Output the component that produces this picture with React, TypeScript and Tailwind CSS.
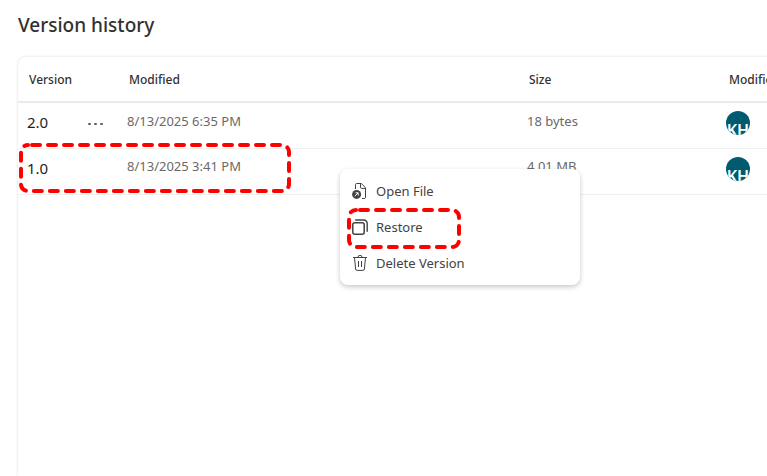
const versions = [
  { version: '2.0', modified: '8/13/2025 6:35 PM', size: '18 bytes', initials: 'KH', showMenuButton: true },
  { version: '1.0', modified: '8/13/2025 3:41 PM', size: '4.01 MB', initials: 'KH', showMenuButton: false },
]

function OpenFileIcon() {
  return (
    <svg width="16" height="16" viewBox="0 0 16 16" fill="none" stroke="currentColor" aria-hidden="true">
      <path d="M3.5 6V1.7A1.2 1.2 0 0 1 4.7 0.5h4.6l4.2 4.2v9.6a1.2 1.2 0 0 1-1.2 1.2H10" />
      <path d="M8.5 0.8v3.4a1.2 1.2 0 0 0 1.2 1.2h3.5" />
      <circle cx="4.6" cy="11.4" r="4.5" fill="currentColor" stroke="none" />
      <path d="M2.8 13.2l3.3-3.3M3.5 9.8h2.7v2.7" stroke="#fff" />
    </svg>
  )
}

function RestoreIcon() {
  return (
    <svg width="16" height="16" viewBox="0 0 16 16" fill="none" stroke="currentColor" aria-hidden="true">
      <rect x="0.8" y="3.8" width="11.4" height="11.4" rx="2" strokeWidth="1.5" />
      <path d="M3.2 1h8.5a3.5 3.5 0 0 1 3.5 3.5v8.2" strokeWidth="1.4" />
    </svg>
  )
}

function DeleteIcon() {
  return (
    <svg width="16" height="16" viewBox="0 0 16 16" fill="none" stroke="currentColor" aria-hidden="true">
      <path d="M1 2.5h14M6 2.3a2 2 0 0 1 4 0M2.5 2.7l1.1 11.3a1.5 1.5 0 0 0 1.5 1.4h5.8a1.5 1.5 0 0 0 1.5-1.4l1.1-11.3" />
      <path d="M6.5 6v6M9.5 6v6" />
    </svg>
  )
}

const menuItems = [
  { label: 'Open File', icon: OpenFileIcon },
  { label: 'Restore', icon: RestoreIcon },
  { label: 'Delete Version', icon: DeleteIcon },
]

function Highlight({ width, height, className }: { width: number; height: number; className: string }) {
  const r = 7
  const right = width - 2
  const bottom = height - 2
  return (
    <svg width={width} height={height} className={`absolute pointer-events-none ${className}`} aria-hidden="true">
      <path
        d={`M${2 + r} 2H${right - r}A${r} ${r} 0 0 1 ${right} ${2 + r}V${bottom - r}A${r} ${r} 0 0 1 ${right - r} ${bottom}H${2 + r}A${r} ${r} 0 0 1 2 ${bottom - r}V${2 + r}A${r} ${r} 0 0 1 ${2 + r} 2`}
        fill="none"
        stroke="#ff0000"
        strokeWidth="4"
        strokeLinecap="round"
        strokeDasharray="8 8"
        strokeDashoffset="-4"
      />
    </svg>
  )
}

export default function App() {
  return (
    <main className="flex min-h-screen flex-col overflow-hidden bg-white pl-[18px] font-['Noto_Sans',sans-serif] text-[#323130]">
      <h1 className="pt-3 pb-[19px] text-[19px] leading-[26px] font-medium">Version history</h1>

      <section className="relative flex-1 rounded-tl-lg shadow-[0_0_3px_rgba(0,0,0,0.14)]">
        <div className="overflow-hidden">
          <table className="w-full table-fixed border-collapse text-left whitespace-nowrap">
            <colgroup>
              <col className="w-[100px]" />
              <col className="w-[400px]" />
              <col className="w-[200px]" />
              <col />
            </colgroup>
            <thead>
              <tr className="h-[45px] border-b-2 border-[#eaeaea] text-xs">
                <th className="px-[11px] pt-0.5 font-medium">Version</th>
                <th className="px-[11px] pt-0.5 font-medium">Modified</th>
                <th className="px-[11px] pt-0.5 font-medium">Size</th>
                <th className="px-[11px] pt-0.5 font-medium">Modified By</th>
              </tr>
            </thead>
            <tbody>
              {versions.map(item => (
                <tr key={item.version} className="h-[46px] border-b border-[#f0f0f0] text-[13px] text-[#6b6967]">
                  <td className="px-[9px] pb-1.5">
                    <div className="flex items-center justify-between">
                      <span className="text-[15px] text-[#201f1e]">{item.version}</span>
                      {item.showMenuButton && (
                        <button aria-label="More options" className="flex w-7 justify-center gap-[3px] pt-1">
                          <span className="h-[2px] w-[3px] rounded-full bg-[#605e5c]" />
                          <span className="h-[2px] w-[3px] rounded-full bg-[#605e5c]" />
                          <span className="h-[2px] w-[3px] rounded-full bg-[#605e5c]" />
                        </button>
                      )}
                    </div>
                  </td>
                  <td className="px-[9px] pb-2">{item.modified}</td>
                  <td className="px-[9px] pb-2">{item.size}</td>
                  <td className="px-2 pb-1">
                    <div className="flex size-6 items-end justify-center overflow-hidden rounded-full bg-[#005b70] text-base leading-[10px] font-semibold text-white">
                      {item.initials}
                    </div>
                  </td>
                </tr>
              ))}
            </tbody>
          </table>
        </div>

        <Highlight width={272} height={50} className="top-[86px] left-px" />

        <div
          role="menu"
          className="absolute top-28 left-[322px] w-60 rounded-lg bg-white py-1 shadow-[0_2px_5px_rgba(0,0,0,0.22)]"
        >
          {menuItems.map(({ label, icon: Icon }) => (
            <button
              key={label}
              role="menuitem"
              className="flex h-9 w-full items-center gap-2 px-3 text-[13px] text-[#424242]"
            >
              <Icon />
              <span className="pt-0.5">{label}</span>
            </button>
          ))}
          <Highlight width={114} height={41} className="top-[39px] left-[7px]" />
        </div>
      </section>
    </main>
  )
}
